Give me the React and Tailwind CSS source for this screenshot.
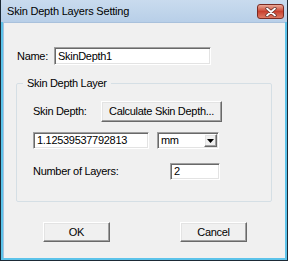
import React from 'react';

const sunken =
  'bg-white border border-t-[#a0a0a0] border-l-[#a0a0a0] border-b-white border-r-white shadow-[inset_1px_1px_0_#696969,inset_-1px_-1px_0_#e3e3e3]';
const raised =
  'bg-[#f0f0f0] border border-t-white border-l-white border-b-[#696969] border-r-[#696969] shadow-[inset_-1px_-1px_0_#a0a0a0,inset_1px_1px_0_#e3e3e3]';

function Field({ className, children }) {
  return (
    <div className={`${sunken} flex items-center pl-[3px] ${className}`}>
      <span className="leading-none">{children}</span>
    </div>
  );
}

function Button({ className, children }) {
  return (
    <div className={`${raised} flex items-center justify-center ${className}`}>
      <span className="leading-none">{children}</span>
    </div>
  );
}

export default function App() {
  return (
    <div className="w-[288px] h-[261px] bg-[#5cc3ea] border-l border-r border-b border-[#1d2a36] flex flex-col overflow-hidden">
      {/* title bar */}
      <div className="h-[22px] shrink-0 bg-gradient-to-b from-[#c9dbee] to-[#b8cfe8] flex items-center justify-between pl-[6px] pr-[3px]">
        <span className="text-[11px] tracking-[-0.2px] text-black font-['Liberation_Sans',Arial,sans-serif] leading-none">
          Skin Depth Layers Setting
        </span>
        <div className="w-[27px] h-[15px] mt-[1px] rounded-[3px] border border-[#7a2a22] bg-gradient-to-b from-[#e9a898] via-[#c8402f] to-[#de7a64] flex items-center justify-center">
          <svg width="12" height="10" viewBox="0 0 12 10">
            <path d="M2 1.5 L10 8.5 M10 1.5 L2 8.5" stroke="#5a2a26" strokeWidth="3.2" strokeLinecap="round" />
            <path d="M2 1.5 L10 8.5 M10 1.5 L2 8.5" stroke="#ffffff" strokeWidth="1.8" strokeLinecap="round" />
          </svg>
        </div>
      </div>

      {/* client area */}
      <div className="flex-1 ml-[2px] mr-[2px] mb-[2px] bg-[#f0f0f0] border-l border-t border-[#a9c1dc] flex flex-col font-['Liberation_Sans',Arial,sans-serif] text-[11px] tracking-[-0.3px] text-black">
        <div className="flex items-center mt-[24px] pl-[13px]">
          <span className="w-[37px]">Name:</span>
          <Field className="w-[157px] h-[18px]">SkinDepth1</Field>
        </div>

        <fieldset className="ml-[12px] w-[256px] h-[125px] mt-[12px] border border-[#d5dfe5] rounded-[2px] px-[16px]">
          <legend className="-ml-[10px] px-[4px] leading-[13px]">Skin Depth Layer</legend>

          <div className="flex items-center mt-[11px]">
            <span className="w-[68px]">Skin Depth:</span>
            <Button className="w-[121px] h-[21px]">Calculate Skin Depth...</Button>
          </div>

          <div className="flex items-center gap-[8px] mt-[10px]">
            <Field className="w-[116px] h-[17px]">1.12539537792813</Field>
            <div className={`${sunken} w-[62px] h-[17px] flex items-center justify-between pl-[3px] pr-[1px]`}>
              <span className="leading-none">mm</span>
              <div className={`${raised} w-[13px] h-[13px] flex items-center justify-center`}>
                <svg width="7" height="4" viewBox="0 0 7 4">
                  <path d="M0 0 H7 L3.5 4 Z" fill="#000" />
                </svg>
              </div>
            </div>
          </div>

          <div className="flex items-center mt-[14px]">
            <span className="w-[137px]">Number of Layers:</span>
            <Field className="w-[50px] h-[17px]">2</Field>
          </div>
        </fieldset>

        <div className="flex mt-[20px] pl-[39px] gap-[70px]">
          <Button className="w-[67px] h-[20px]">OK</Button>
          <Button className="w-[67px] h-[20px]">Cancel</Button>
        </div>
      </div>
    </div>
  );
}
